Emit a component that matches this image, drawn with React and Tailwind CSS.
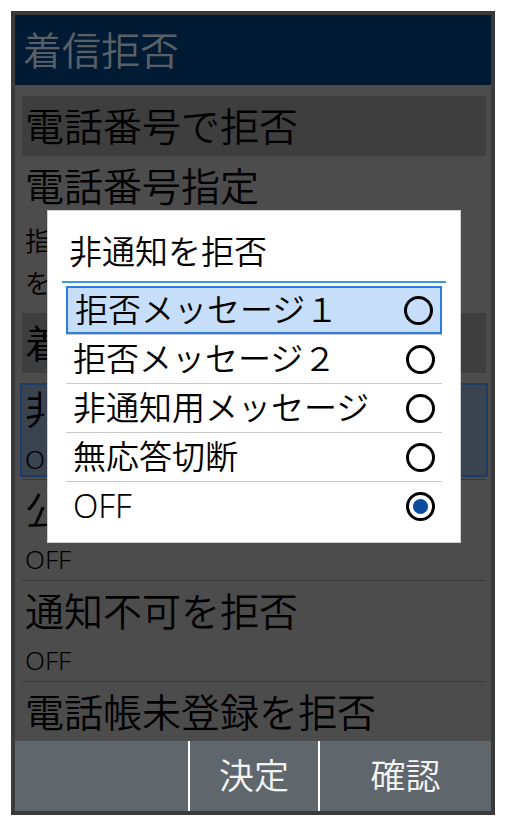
import React from "react";

function Radio({ checked }) {
  return (
    <div className="w-[29px] h-[29px] rounded-full border-[3px] border-black flex items-center justify-center shrink-0">
      {checked ? <div className="w-[15px] h-[15px] rounded-full bg-[#0b4c9c]" /> : null}
    </div>
  );
}

function Item({ title, sub }) {
  return (
    <div className={sub ? "border-b border-[#393939]" : ""}>
      <div className="pt-[6px] pl-[3px] text-[39px] leading-[48px] text-black whitespace-nowrap">{title}</div>
      {sub ? <div className="mt-[4px] pl-[3px] text-[26px] leading-[42px] text-black">{sub}</div> : null}
    </div>
  );
}

export default function App() {
  const options = [
    { label: "拒否メッセージ１", checked: false, focus: true },
    { label: "拒否メッセージ２", checked: false },
    { label: "非通知用メッセージ", checked: false },
    { label: "無応答切断", checked: false },
    { label: "OFF", checked: true, last: true },
  ];
  return (
    <div className="font-['Noto_Sans','Noto_Sans_CJK_JP',sans-serif] font-[350] pl-[11px] pt-[11px] bg-white min-h-[826px]">
      <div className="relative w-[484px] h-[804px] border-4 border-[#3a3a3a] bg-[#4c4c4c] flex flex-col overflow-hidden">
        {/* header */}
        <div className="h-[70px] shrink-0 bg-[#001b33] flex items-center pl-[8px]">
          <span className="text-[39px] leading-[48px] text-[#5b6067]">着信拒否</span>
        </div>

        {/* content */}
        <div className="flex-1 overflow-hidden pl-[7px] pr-[5px]">
          <div className="mt-[11px] h-[60px] bg-[#3e3e3e] flex items-center pl-[3px] text-[39px] text-black whitespace-nowrap">
            電話番号で拒否
          </div>
          <div className="pt-[6px] pb-[9px]">
            <div className="pl-[3px] text-[39px] leading-[48px] text-black">電話番号指定</div>
            <div className="mt-[10px] pl-[3px] text-[26px] leading-[42px] text-black">
              <div>指定した電話番号からの着信</div>
              <div>を拒否します</div>
            </div>
          </div>
          <div className="h-[60px] bg-[#3e3e3e] flex items-center pl-[3px] text-[39px] text-black whitespace-nowrap">
            着信拒否の種類
          </div>
          <div className="mt-[10px] -mx-[2px] border-2 border-[#1c3b66] bg-[#3a4350]">
            <div className="pl-[3px] text-[39px] leading-[48px] text-black">非通知を拒否</div>
            <div className="mt-[10px] pl-[3px] text-[26px] leading-[32px] text-black">OFF</div>
          </div>
          <div className="mt-[2px] border-b border-[#393939]" />
          <Item title="公衆電話を拒否" sub="OFF" />
          <Item title="通知不可を拒否" sub="OFF" />
          <Item title="電話帳未登録を拒否" />
        </div>

        {/* soft keys */}
        <div className="h-[70px] shrink-0 bg-[#5f676d] flex text-[35px] text-[#f4f4f4]">
          <div className="w-[173px]" />
          <div className="w-[2px] bg-white" />
          <div className="w-[128px] flex items-center justify-center">決定</div>
          <div className="w-[2px] bg-white" />
          <div className="flex-1 flex items-center justify-center">確認</div>
        </div>

        {/* dialog */}
        <div className="absolute left-[32px] top-[195px] w-[414px] h-[333px] bg-white border border-[#d0d0d0]">
          <div className="pt-[17px] pl-[21px] text-[33px] leading-[48px] text-black">非通知を拒否</div>
          <div className="mt-[5px] mx-[14px] h-[2px] bg-[#3497ea]" />
          <div className="mt-[3px] mx-[18px]">
            {options.map((o) => (
              <div key={o.label} className={o.last ? "" : "border-b border-[#c9c9c9]"}>
                <div
                  className={
                    "h-[48px] flex items-center justify-between pl-[7px] pr-[7px] " +
                    (o.focus ? "border-2 border-[#2b7de0] bg-[#c6defa]" : "")
                  }
                >
                  <span className="text-[33px] leading-[40px] text-black whitespace-nowrap">{o.label}</span>
                  <Radio checked={o.checked} />
                </div>
              </div>
            ))}
          </div>
        </div>
      </div>
    </div>
  );
}
